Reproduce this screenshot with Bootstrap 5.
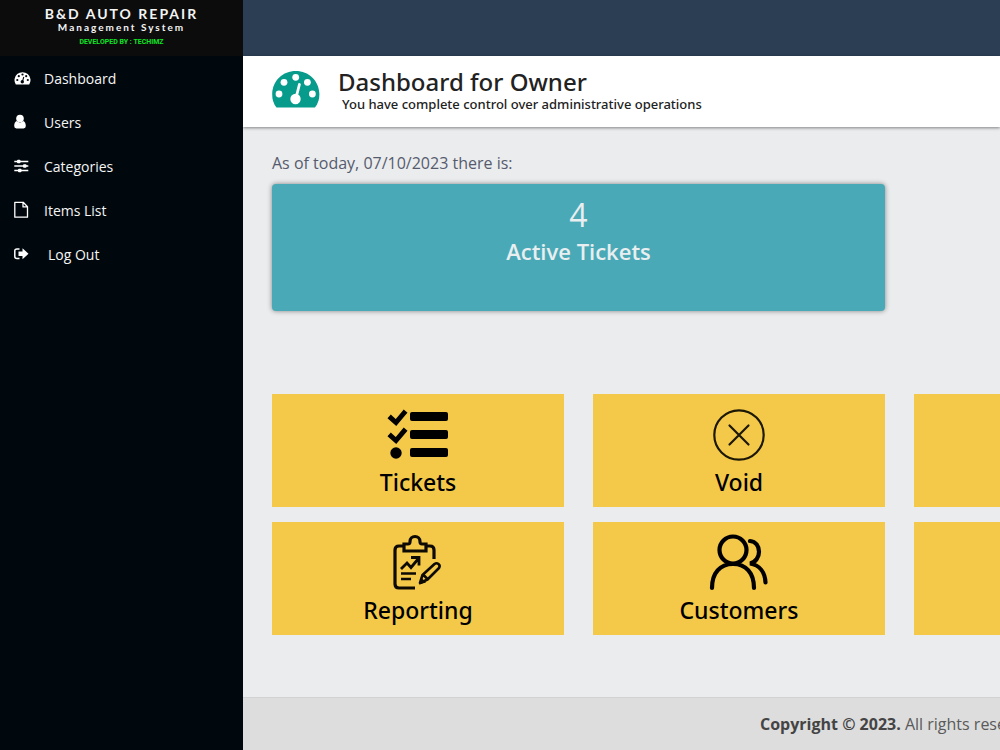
<!DOCTYPE html>
<html lang="en">
<head>
<meta charset="utf-8">
<meta name="viewport" content="width=device-width, initial-scale=1">
<title>Dashboard for Owner</title>
<link href="https://cdn.jsdelivr.net/npm/bootstrap@5.3.0/dist/css/bootstrap.min.css" rel="stylesheet">
<style>
body { font-family: "Open Sans", "Noto Sans", sans-serif; background: #ebeced; }
.sidebar { width: 243px; background: #00080d; }
.brand { height: 56px; background: #0c0c0c; color: #f4f4f4; padding-top: 6px; }
.brand-name { font: 700 14px/16px Lato, sans-serif; letter-spacing: 2px; }
.brand-sub { font: 700 10px/11px Lato, sans-serif; letter-spacing: 2px; }
.brand-dev { font: 700 7px/18px Roboto, sans-serif; color: #10e526; }
.side-link { height: 44px; padding: 0 14px; color: #f5f5f5; font-size: 14px; gap: 12px; }
.side-link:hover { color: #fff; background: #10202a; }
.side-link svg { width: 18px; height: 18px; }
.topbar { height: 56px; background: #2b3e54; }
.page-title { height: 71px; padding: 12px 29px 0; background: #fff; gap: 18px; box-shadow: 0 1px 3px rgba(0,0,0,.45); }
.page-title svg { margin-top: 2px; }
.page-title h1, .page-title p, .tile { font-family: "Noto Sans", "Open Sans", sans-serif; font-weight: 500; }
.page-title h1 { font-size: 24px; line-height: 28px; color: #222; }
.page-title p { font-size: 13px; line-height: 16px; color: #222; padding-left: 4px; }
.content-area { padding: 26px 29px 62px; }
.as-of { font-size: 16px; line-height: 21px; color: #555b6e; margin-bottom: 10px; }
.tiles { display: grid; grid-template-columns: repeat(3, 292px); gap: 15px 29px; }
.active-card { grid-column: span 2; height: 127px; padding-top: 13px; background: #4aa9b6; color: #e9eef0; border-radius: 4px; box-shadow: 0 0 5px rgba(0,0,0,.45); margin-bottom: 68px; }
.active-count { font-size: 32px; line-height: 36px; }
.active-label { font-size: 22px; line-height: 36px; font-weight: 600; }
.tile { height: 113px; padding-top: 10px; background: #f4c949; color: #000; font-size: 23px; line-height: 32px; }
.tile:hover { background: #f0c139; color: #000; }
.tile svg { width: 62px; height: 62px; }
.page-footer { padding: 16px 0 16px 517px; background: #ddd; border-top: 1px solid #d2d2d2; color: #5a5a5a; font-size: 16px; line-height: 21px; }
.page-footer strong { color: #444; }
</style>
</head>
<body>
<div class="d-flex min-vh-100 overflow-hidden">
  <aside class="sidebar flex-shrink-0">
    <div class="brand text-center">
      <div class="brand-name">B&amp;D AUTO REPAIR</div>
      <div class="brand-sub">Management System</div>
      <div class="brand-dev">DEVELOPED BY : TECHIMZ</div>
    </div>
    <nav class="d-flex flex-column" aria-label="Main">
      <a href="#" class="side-link d-flex align-items-center text-decoration-none">
        <svg viewBox="0 0 18 18" aria-hidden="true"><path fill="#fff" d="M1.8 15.5A8 8 0 1 1 15.2 15.5Z"/><g fill="#00080d"><circle cx="3.3" cy="11" r="1.1"/><circle cx="4.8" cy="7.2" r="1.1"/><circle cx="8.5" cy="5.5" r="1.1"/><circle cx="12.2" cy="7.2" r="1.1"/><circle cx="13.8" cy="11" r="1.1"/><circle cx="8.3" cy="12.8" r="1.7"/></g><path d="M8.4 12.6L9.8 8" stroke="#00080d" stroke-width="1.1"/></svg>
        <span>Dashboard</span></a>
      <a href="#" class="side-link d-flex align-items-center text-decoration-none">
        <svg viewBox="0 0 18 18" aria-hidden="true"><g fill="#fff"><circle cx="6" cy="5.5" r="3.8"/><path d="M2.7 8C1 8.5.2 10.5.2 13q0 2.4 2.2 2.4h7.2q2.2 0 2.2-2.4c0-2.500-.8-4.500-2.500-5A5 5 0 0 1 2.700 8z"/></g></svg>
        <span>Users</span></a>
      <a href="#" class="side-link d-flex align-items-center text-decoration-none">
        <svg viewBox="0 0 18 18" aria-hidden="true"><path d="M.3 4.500h14M.3 9h14M.3 13.500h14" stroke="#fff" stroke-width="1.500"/><g fill="#fff"><rect x="3" y="2.800" width="3.500" height="3.400" rx="1"/><rect x="9" y="7.300" width="3.500" height="3.400" rx="1"/><rect x="4" y="11.800" width="3.500" height="3.400" rx="1"/></g></svg>
        <span>Categories</span></a>
      <a href="#" class="side-link d-flex align-items-center text-decoration-none">
        <svg viewBox="0 0 18 18" aria-hidden="true"><path d="M.8 1.300h8.400L13.500 5.700V16.200H.8zM9 1.300v4.600h4.500" fill="none" stroke="#fff" stroke-width="1.300" stroke-linejoin="round"/></svg>
        <span>Items List</span></a>
      <a href="#" class="side-link d-flex align-items-center text-decoration-none">
        <svg viewBox="0 0 18 18" aria-hidden="true"><path d="M5.500 4H3Q.8 4 .8 6v5.500q0 2 2.200 2h2.500" fill="none" stroke="#fff" stroke-width="1.500"/><path fill="#fff" d="M4.500 6.500h4V3.300L14.500 8.800 8.500 14.200V11h-4z"/></svg>
        <span class="ps-1">Log Out</span></a>
    </nav>
  </aside>
  <div class="flex-grow-1 overflow-hidden d-flex flex-column">
    <header class="topbar flex-shrink-0"></header>
    <div class="page-title d-flex align-items-start flex-shrink-0">
      <svg width="48" height="38" viewBox="0 0 48 38" aria-hidden="true"><path fill="#079b8c" d="M4.500 37.500Q0 32 .2 24C.5 10.500 11 1 23.800 1S47 10.500 47.400 24q.1 8-4.500 13.500z"/><g fill="#fff"><circle cx="7" cy="24" r="3.400"/><circle cx="12" cy="12.300" r="3.400"/><circle cx="23.700" cy="7.300" r="3.400"/><circle cx="35.400" cy="12.300" r="3.400"/><circle cx="40.400" cy="24" r="3.400"/><circle cx="23.500" cy="29" r="5.200"/></g><path d="M24 28l3.400-13.500" stroke="#fff" stroke-width="2.800" stroke-linecap="round"/></svg>
      <div>
        <h1 class="mb-0">Dashboard for Owner</h1>
        <p class="mb-0">You have complete control over administrative operations</p>
      </div>
    </div>
    <main class="content-area flex-grow-1">
      <p class="as-of">As of today, 07/10/2023 there is:</p>
      <div class="tiles">
        <section class="active-card text-center">
          <div class="active-count">4</div>
          <div class="active-label">Active Tickets</div>
        </section>
        <div></div>
        <a href="#" class="tile d-flex flex-column align-items-center text-decoration-none">
          <svg viewBox="0 0 62 62" aria-hidden="true"><rect x="23" y="8" width="38" height="9" rx="2"/><rect x="23" y="26" width="38" height="9" rx="2"/><rect x="23" y="44" width="38" height="9" rx="2"/><circle cx="9" cy="49" r="5.700"/><path d="M4 14l5 4.500L17 9M4 32l5 4.500L17 27" fill="none" stroke="#000" stroke-width="5" stroke-linecap="square"/></svg>
          Tickets</a>
        <a href="#" class="tile d-flex flex-column align-items-center text-decoration-none">
          <svg viewBox="0 0 62 62" fill="none" stroke="#1c1805" stroke-width="2.200" stroke-linecap="round" aria-hidden="true"><circle cx="31" cy="31" r="24.700"/><path d="M21.500 21.500l19 19M40.500 21.500l-19 19"/></svg>
          Void</a>
        <a href="#" class="tile d-flex flex-column align-items-center text-decoration-none" aria-label="More"></a>
        <a href="#" class="tile d-flex flex-column align-items-center text-decoration-none">
          <svg viewBox="0 0 62 62" fill="none" stroke="#0c0a02" stroke-width="3.200" aria-hidden="true"><path d="M16 14h-4q-4 0-4 4v34q0 4 4 4h16M38 14h5q4 0 4 4v9"/><path d="M17 12h4c2 0 2-1 2-2.500a5 5 0 0 1 10 0C33 11 33 12 35 12H39v7H17z"/><path d="M14 37l6-6 4 4.500 7.500-9M24 25.500h8v8" stroke-width="2.800"/><path d="M14 41.500h15M14 47h10" stroke-width="2.600"/><path d="M33 51l2.500-8L47.500 32q2-1.500 4 0t.5 4L40.500 47.500zM36 42.500l5 5" stroke-width="2.600" stroke-linejoin="round"/><path d="M32 52.500l2-7 5 5z" fill="#0c0a02" stroke="none"/></svg>
          Reporting</a>
        <a href="#" class="tile d-flex flex-column align-items-center text-decoration-none">
          <svg viewBox="0 0 62 62" fill="none" stroke="#000" stroke-width="4.200" stroke-linecap="round" aria-hidden="true"><circle cx="25" cy="18" r="13.500"/><path d="M4 56C4 41 12 32 25 32S46 41 46 56M42 9C54 10 54 29 42 31.500C52 33 57 41 57.500 50.500"/></svg>
          Customers</a>
        <a href="#" class="tile d-flex flex-column align-items-center text-decoration-none" aria-label="More"></a>
      </div>
    </main>
    <footer class="page-footer text-nowrap"><strong>Copyright © 2023.</strong> All rights reserved.</footer>
  </div>
</div>
<script src="https://cdn.jsdelivr.net/npm/bootstrap@5.3.0/dist/js/bootstrap.bundle.min.js"></script>
</body>
</html>
